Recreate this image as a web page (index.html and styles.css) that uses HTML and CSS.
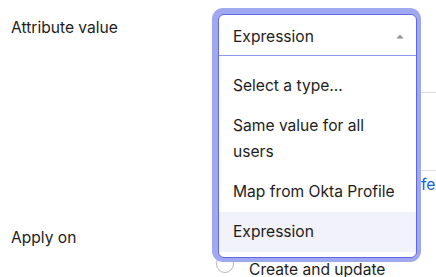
FILE: index.html
```html
<!DOCTYPE html>
<html lang="en">
<head>
<meta charset="utf-8">
<link rel="stylesheet" href="styles.css">
</head>
<body>
<form class="form">
  <div class="row row-attr">
    <div class="label">Attribute value</div>
    <div class="field">
      <div class="combo">
        <div class="combo-box">
          <div class="combo-head">
            <span class="combo-value">Expression</span>
            <svg class="caret" width="8" height="5" viewBox="0 0 8 5"><path d="M0.5 4.5 L4 0.8 L7.5 4.5 Z" fill="#8e8e96"/></svg>
          </div>
          <ul class="menu">
            <li class="option">Select a type...</li>
            <li class="option">Same value for all users</li>
            <li class="option">Map from Okta Profile</li>
            <li class="option option-active">Expression</li>
          </ul>
        </div>
      </div>
      <div class="expr-box"></div>
      <div class="hint"><a class="hint-link">Reference</a></div>
    </div>
  </div>
  <div class="row row-apply">
    <div class="label">Apply on</div>
    <div class="field field-radios">
      <label class="radio"><span class="radio-dot"></span><span class="radio-text">Create and update</span></label>
    </div>
  </div>
</form>
</body>
</html>
```
FILE: styles.css
```css
html, body {
  margin: 0;
  padding: 0;
  overflow: hidden;
  background: #ffffff;
}
body {
  width: 436px;
  height: 277px;
  font-family: Inter, "Noto Sans", sans-serif;
  font-size: 15.6px;
  color: #1d1d21;
}
.form {
  padding: 14px 0 0 11px;
  display: flex;
  flex-direction: column;
  gap: 33px;
}
.row {
  display: grid;
  grid-template-columns: 207px 300px;
}
.label {
  line-height: 20px;
  margin-top: 4px;
}
.row-apply .label {
  margin-top: 0;
}
.field {
  display: flex;
  flex-direction: column;
}
.combo {
  position: relative;
  height: 42px;
  width: 199px;
  z-index: 2;
}
.combo-box {
  position: absolute;
  top: 0;
  left: 0;
  width: 199px;
  box-sizing: border-box;
  border: 1px solid #5d68e2;
  border-radius: 6px;
  background: #ffffff;
  box-shadow: -1px -1px 0 5px #a0a8f2;
}
.combo-head {
  height: 40px;
  border-bottom: 1px solid #8f98ef;
  display: flex;
  align-items: center;
  justify-content: space-between;
  padding: 0 12px 0 14px;
}
.combo-value {
  line-height: 20px;
  padding-top: 3px;
}
.caret {
  display: block;
  margin-top: 2px;
}
.menu {
  list-style: none;
  margin: 0;
  padding: 10px 0 5px;
}
.option {
  padding: 7px 14px;
  line-height: 26px;
}
.option-active {
  background: #f1f2fa;
}
.expr-box {
  margin-top: 36px;
  height: 79px;
  box-sizing: border-box;
  border-top: 1px solid #dfdfe3;
  border-bottom: 1px solid #dfdfe3;
}
.hint {
  margin-top: 4px;
  line-height: 20px;
  white-space: nowrap;
}
.hint-link {
  margin-left: 184px;
  color: #1662dd;
}
.field-radios {
  padding-top: 27px;
}
.radio {
  display: flex;
  align-items: flex-start;
  gap: 15px;
  margin-left: -2px;
}
.radio-dot {
  width: 18px;
  height: 18px;
  box-sizing: border-box;
  border: 1.5px solid #b8b8be;
  border-radius: 50%;
  background: #fff;
}
.radio-text {
  line-height: 20px;
  padding-top: 5px;
  white-space: nowrap;
}
```
